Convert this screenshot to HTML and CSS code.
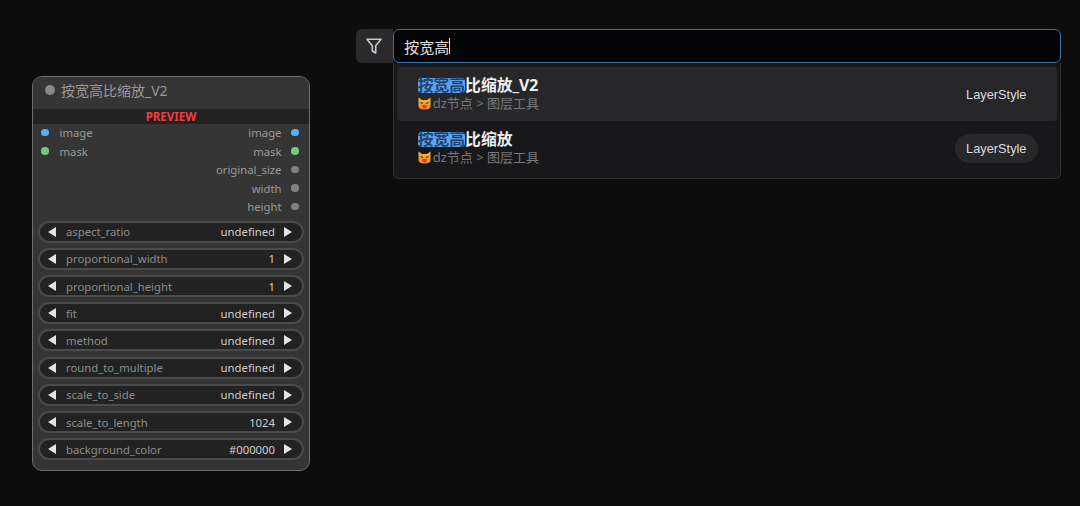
FILE: index.html
```html
<!DOCTYPE html>
<html lang="zh">
<head>
<meta charset="utf-8">
<title>按宽高比缩放_V2</title>
<link rel="stylesheet" href="styles.css">
</head>
<body>
<svg class="defs" width="0" height="0" aria-hidden="true">
  <defs>
    <linearGradient id="fur" x1="0" y1="0" x2="0" y2="1">
      <stop offset="0" stop-color="#f7b93a"/>
      <stop offset="1" stop-color="#ee8a25"/>
    </linearGradient>
  </defs>
  <symbol id="cat" viewBox="0 0 13 13">
    <path d="M.5 .5 L4 3 H9 L12.5 .5 L12.5 9 Q12.5 12.5 6.5 12.5 Q.5 12.5 .5 9 Z" fill="url(#fur)"/>
    <path d="M2.5 5.5 L5 6.6 M10.5 5.5 L8 6.6" stroke="#5a3000" stroke-width="1.1"/>
    <path d="M4.2 8 H8.8 Q8.6 11.4 6.5 11.4 Q4.4 11.4 4.2 8 Z" fill="#d03a4a"/>
  </symbol>
</svg>

<section class="node">
  <header class="node-title"><span class="node-dot"></span><span>按宽高比缩放_V2</span></header>
  <div class="preview">PREVIEW</div>
  <div class="slots">
    <div class="slot"><i class="dot blue"></i><span class="slot-in">image</span><span class="slot-out">image</span><i class="dot blue"></i></div>
    <div class="slot"><i class="dot green"></i><span class="slot-in">mask</span><span class="slot-out">mask</span><i class="dot green"></i></div>
    <div class="slot"><span class="slot-out">original_size</span><i class="dot grey"></i></div>
    <div class="slot"><span class="slot-out">width</span><i class="dot grey"></i></div>
    <div class="slot"><span class="slot-out">height</span><i class="dot grey"></i></div>
  </div>
  <div class="widgets">
    <div class="widget"><i class="arrow left"></i><span class="w-name">aspect_ratio</span><span class="w-val">undefined</span><i class="arrow right"></i></div>
    <div class="widget"><i class="arrow left"></i><span class="w-name">proportional_width</span><span class="w-val">1</span><i class="arrow right"></i></div>
    <div class="widget"><i class="arrow left"></i><span class="w-name">proportional_height</span><span class="w-val">1</span><i class="arrow right"></i></div>
    <div class="widget"><i class="arrow left"></i><span class="w-name">fit</span><span class="w-val">undefined</span><i class="arrow right"></i></div>
    <div class="widget"><i class="arrow left"></i><span class="w-name">method</span><span class="w-val">undefined</span><i class="arrow right"></i></div>
    <div class="widget"><i class="arrow left"></i><span class="w-name">round_to_multiple</span><span class="w-val">undefined</span><i class="arrow right"></i></div>
    <div class="widget"><i class="arrow left"></i><span class="w-name">scale_to_side</span><span class="w-val">undefined</span><i class="arrow right"></i></div>
    <div class="widget"><i class="arrow left"></i><span class="w-name">scale_to_length</span><span class="w-val">1024</span><i class="arrow right"></i></div>
    <div class="widget"><i class="arrow left"></i><span class="w-name">background_color</span><span class="w-val">#000000</span><i class="arrow right"></i></div>
  </div>
</section>

<section class="search">
  <button class="filter" type="button" aria-label="filter">
    <svg width="18" height="18" viewBox="0 0 18 18" fill="none" stroke="#c8c8c8" stroke-width="1.6" stroke-linejoin="round">
      <path d="M2 2.2 H16 L10.7 8.8 V16 L7.3 14 V8.8 Z"/>
    </svg>
  </button>
  <div class="search-main">
    <div class="input"><span>按宽高</span><span class="caret"></span></div>
    <ul class="results">
      <li class="result active">
        <div class="r-text">
          <div class="r-title"><mark>按宽高</mark>比缩放_V2</div>
          <div class="r-path"><svg class="cat" width="13" height="13"><use href="#cat"/></svg>dz节点 &gt; 图层工具</div>
        </div>
        <span class="tag plain">LayerStyle</span>
      </li>
      <li class="result">
        <div class="r-text">
          <div class="r-title"><mark>按宽高</mark>比缩放</div>
          <div class="r-path"><svg class="cat" width="13" height="13"><use href="#cat"/></svg>dz节点 &gt; 图层工具</div>
        </div>
        <span class="tag">LayerStyle</span>
      </li>
    </ul>
  </div>
</section>
</body>
</html>
```
FILE: styles.css
```css
* { box-sizing: border-box; }
html, body { margin: 0; height: 100%; }
body {
  position: relative;
  width: 1080px;
  height: 506px;
  overflow: hidden;
  background: #0d0d0d;
  font-family: "Noto Sans", "Noto Sans CJK SC", sans-serif;
}
.defs { position: absolute; }

/* node on the free canvas */
.node {
  position: absolute;
  left: 32px;
  top: 76px;
  width: 278px;
  height: 395px;
  background: #353535;
  border: 1.5px solid #6e6e6e;
  border-radius: 10px;
  overflow: hidden;
  display: flex;
  flex-direction: column;
}
.node-title {
  height: 31.5px;
  flex: none;
  display: flex;
  align-items: center;
  gap: 6px;
  padding: 0 0 5px 12px;
  font-size: 14px;
  color: #999;
  background: #353535;
}
.node-dot { width: 10px; height: 10px; border-radius: 50%; background: #8a8a8a; }
.preview {
  height: 15px;
  flex: none;
  background: #222;
  color: #f03c3c;
  font-size: 11.5px;
  font-weight: 700;
  line-height: 15px;
  text-align: center;
}
.slots { display: flex; flex-direction: column; }
.slot {
  height: 18.45px;
  display: flex;
  align-items: center;
  justify-content: flex-end;
  padding: 0 10.5px 0 8px;
  font-size: 11.3px;
  color: #999;
}
.dot { width: 7.5px; height: 7.5px; border-radius: 50%; flex: none; }
.blue { background: #5aaef5; }
.green { background: #75c97a; }
.grey { background: #808080; }
.slot-in { margin-left: 11px; margin-right: auto; }
.slot-out { margin-right: 9.5px; }
.widgets {
  margin-top: 5px;
  padding: 0 5px;
  display: flex;
  flex-direction: column;
  gap: 5.2px;
}
.widget {
  height: 22px;
  display: flex;
  align-items: center;
  padding: 0 10px 0 7.5px;
  background: #222;
  border: 2px solid #4a4a4a;
  border-radius: 11px;
  font-size: 11.3px;
}
.w-name { margin-left: 10.5px; color: #8c8c8c; }
.w-val { margin-left: auto; margin-right: 9px; color: #ccc; }
.arrow { width: 0; height: 0; flex: none; border-top: 5px solid transparent; border-bottom: 5px solid transparent; }
.arrow.left { border-right: 8.5px solid #e4e4e4; }
.arrow.right { border-left: 8.5px solid #e4e4e4; }

/* search overlay */
.search {
  position: absolute;
  left: 356px;
  top: 29px;
  width: 704.5px;
  display: flex;
}
.filter {
  width: 36.7px;
  height: 34px;
  flex: none;
  padding: 0 1px 0 0;
  border: 0;
  border-radius: 6px 0 0 6px;
  background: #2a2a2c;
  display: flex;
  align-items: center;
  justify-content: center;
}
.search-main { flex: 1; display: flex; flex-direction: column; }
.input {
  height: 34px;
  display: flex;
  align-items: center;
  padding-left: 10.5px;
  background: #050508;
  border: 1.5px solid #3c6ea8;
  border-radius: 6px;
  color: #e0e0e0;
  font-size: 15px;
}
.caret { width: 1px; height: 16px; margin-left: 0; background: #e0e0e0; }
.results {
  list-style: none;
  margin: 0;
  height: 116px;
  padding: 3.5px 3px;
  background: #18181a;
  border: 1px solid #303033;
  border-top: 0;
  border-radius: 0 0 6px 6px;
  display: flex;
  flex-direction: column;
}
.result {
  height: 54px;
  flex: none;
  display: flex;
  align-items: center;
  justify-content: space-between;
  padding: 0 18.5px 0 21px;
  border-radius: 4px;
}
.result.active { background: #27272a; }
.r-title { font-size: 15.8px; line-height: 20px; font-weight: 700; color: #f0f0f0; }
.r-title mark {
  background: #5ca2f2;
  color: #1f4370;
  border-radius: 4px;
  padding: 0;
  display: inline-block;
  line-height: 15px;
}
.r-path {
  display: flex;
  align-items: center;
  font-size: 13px;
  line-height: 17px;
  color: #77777a;
}
.cat { margin-right: 2px; }
.tag {
  height: 29px;
  margin-top: 1px;
  padding: 0 11.5px;
  display: flex;
  align-items: center;
  border-radius: 15px;
  background: #28282b;
  color: #dcdcdc;
  font-family: "Liberation Sans", sans-serif;
  font-size: 12.8px;
}
.tag.plain { background: transparent; }
```
